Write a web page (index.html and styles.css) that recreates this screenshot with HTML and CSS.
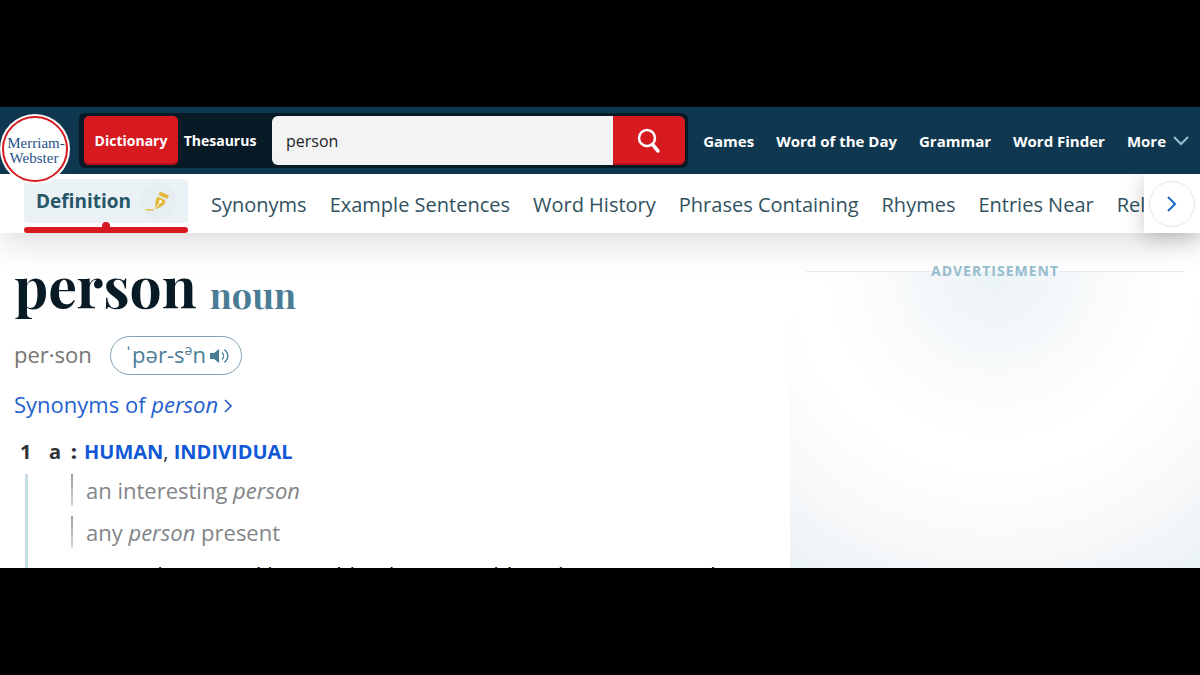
FILE: index.html
```
<!DOCTYPE html>
<html lang="en">
<head>
    <meta charset="UTF-8">
    <meta name="viewport" content="width=device-width, initial-scale=1.0">
    <title>Person Definition &amp; Meaning - Merriam-Webster</title>
    <link rel="stylesheet" href="styles.css">
</head>
<body>
    <div class="page">
        <header class="header">
            <a href="#" class="logo" aria-label="Merriam-Webster">
                <svg viewBox="0 0 72 72">
                    <circle cx="36" cy="36" r="35" fill="#fff"/>
                    <circle cx="36" cy="36" r="32" fill="none" stroke="#d71920" stroke-width="2"/>
                    <text x="37" y="35" text-anchor="middle">Merriam-</text>
                    <text x="35" y="50" text-anchor="middle">Webster</text>
                </svg>
            </a>
            <form class="search">
                <button type="button" class="mode active">Dictionary</button>
                <button type="button" class="mode thesaurus">Thesaurus</button>
                <input type="text" class="search-input" value="person" aria-label="Search">
                <button type="button" class="search-btn" aria-label="Search">
                    <svg width="24" height="26" viewBox="0 0 24 26" fill="none" stroke="#fff">
                        <circle cx="10" cy="10" r="8" stroke-width="2.500"/>
                        <path d="M15.500 16.500 21 23" stroke-width="3.500" stroke-linecap="round"/>
                    </svg>
                </button>
            </form>
            <nav class="main-nav">
                <a href="#">Games</a>
                <a href="#">Word of the Day</a>
                <a href="#">Grammar</a>
                <a href="#">Word Finder</a>
                <a href="#" class="more">More
                    <svg width="16" height="10" viewBox="0 0 16 10" fill="none" stroke="#97bece" stroke-width="2"><path d="M1 1l7 7 7-7"/></svg>
                </a>
            </nav>
        </header>

        <nav class="tabs">
            <a href="#" class="tab current">
                Definition
                <span class="pen">
                    <svg width="24" height="24" viewBox="0 0 24 24">
                        <path d="M0 20h8v1.500H0z" fill="#e0c04e"/>
                        <path d="M14 2.500l9 4-2 3.500-8.500-4z" fill="#e0b83c"/>
                        <path d="M11.500 7.500l8 4c0 4-4 6.500-10 8.500-.5-5-.5-9 2-12.500z" fill="#e0b83c"/>
                        <path d="M10.500 18.500l3.500-5.500" stroke="#fff" stroke-width="1"/>
                        <circle cx="14.500" cy="12.500" r="1.500" fill="#fff"/>
                    </svg>
                </span>
            </a>
            <a href="#" class="tab">Synonyms</a>
            <a href="#" class="tab">Example Sentences</a>
            <a href="#" class="tab">Word History</a>
            <a href="#" class="tab">Phrases Containing</a>
            <a href="#" class="tab">Rhymes</a>
            <a href="#" class="tab">Entries Near</a>
            <a href="#" class="tab">Related Articles</a>
            <div class="tabs-next">
                <button type="button" aria-label="Next">
                    <svg width="10" height="16" viewBox="0 0 10 16" fill="none" stroke="#1a6ac9" stroke-width="2"><path d="M1 1l7 7-7 7"/></svg>
                </button>
            </div>
        </nav>

        <div class="content">
            <main class="entry">
                <div class="entry-head">
                    <h1>person</h1>
                    <h2>noun</h2>
                </div>
                <div class="pron">
                    <span class="syllables">per·son</span>
                    <button type="button" class="audio">
                        <span>ˈpər-s<sup>ə</sup>n</span>
                        <svg width="20" height="16" viewBox="0 0 20 16">
                            <path d="M0 5h4l5-4v14l-5-4H0z" fill="#4a7d95"/>
                            <path d="M12 4.500c2 2 2 5 0 7M14.500 1.500c4.500 4 4.500 9 0 13" fill="none" stroke="#4a7d95" stroke-width="1.300"/>
                        </svg>
                    </button>
                </div>
                <a href="#" class="syn-link">Synonyms of <em>person</em>
                    <svg width="9" height="14" viewBox="0 0 9 14" fill="none" stroke="#265fc4" stroke-width="1.700"><path d="M1 1l6 6-6 6"/></svg>
                </a>
                <div class="sense">
                    <div class="sense-line">
                        <span class="num">1</span>
                        <span class="letter">a</span>
                        <b class="colon">:</b>
                        <span class="def"><a href="#">HUMAN</a>, <a href="#">INDIVIDUAL</a></span>
                    </div>
                    <div class="sense-body">
                        <p class="example">an interesting <em>person</em></p>
                        <p class="example">any <em>person</em> present</p>
                        <p class="usage">—sometimes used in combination now with various nouns and</p>
                    </div>
                </div>
            </main>
            <aside class="ad">
                <div class="ad-label"><span>ADVERTISEMENT</span></div>
            </aside>
        </div>
    </div>
</body>
</html>
```
FILE: styles.css
```
* {
    box-sizing: border-box;
}
body {
    margin: 0;
    padding: 107px 0;
    height: 100vh;
    background: #000;
    font-family: "Open Sans", sans-serif;
    overflow: hidden;
}
a {
    text-decoration: none;
}
button {
    border: 0;
    padding: 0;
    font-family: inherit;
    cursor: pointer;
}
.page {
    height: 100%;
    background: #fff;
    overflow: hidden;
    display: flex;
    flex-direction: column;
}

/* header */
.header {
    height: 67px;
    flex: none;
    background: #0f3850;
    display: flex;
    align-items: center;
    position: relative;
    z-index: 3;
}
.logo {
    width: 72px;
    height: 72px;
    margin-left: -1px;
    margin-right: 8px;
    align-self: flex-start;
    padding-top: 6px;
    flex: none;
}
.logo svg {
    display: block;
    width: 72px;
    height: 72px;
}
.logo text {
    font-family: "Liberation Serif", serif;
    font-size: 15px;
    fill: #1f5288;
}
.search {
    flex: 1;
    height: 55px;
    background: #081a26;
    border-radius: 6px;
    padding: 3px 3px 3px 5px;
    display: flex;
    align-items: center;
}
.mode {
    width: 94px;
    height: 49px;
    background: none;
    border-radius: 5px;
    color: #fff;
    font-size: 14px;
    font-weight: 700;
    white-space: nowrap;
    flex: none;
}
.mode.active {
    background: #d71920;
    box-shadow: inset 0 -2px #b5121b;
}
.mode.thesaurus {
    width: 84px;
    margin-right: 10px;
}
.search-input {
    flex: 1;
    min-width: 0;
    height: 49px;
    border: 0;
    border-radius: 6px 0 0 6px;
    background: #f3f3f3;
    padding: 0 14px;
    color: #212529;
    font-family: inherit;
    font-size: 16px;
}
.search-btn {
    width: 72px;
    height: 49px;
    background: #d71920;
    box-shadow: inset 0 -2px #b5121b;
    border-radius: 0 6px 6px 0;
    display: flex;
    align-items: center;
    justify-content: center;
}
.main-nav {
    display: flex;
    gap: 22px;
    padding: 0 11px 0 15px;
    white-space: nowrap;
}
.main-nav a {
    color: #fff;
    font-size: 15px;
    font-weight: 700;
}
.more {
    display: flex;
    align-items: center;
    gap: 7px;
}

/* tabs */
.tabs {
    height: 59px;
    flex: none;
    background: #fff;
    display: flex;
    align-items: center;
    gap: 23px;
    padding-left: 24px;
    box-shadow: 0 8px 36px rgba(0, 0, 0, 0.15);
    position: relative;
    z-index: 2;
    white-space: nowrap;
}
.tab {
    color: #30525f;
    font-size: 20px;
    padding-top: 1px;
    flex: none;
}
.tab.current {
    height: 44px;
    align-self: flex-start;
    margin-top: 5px;
    padding: 0 12px;
    display: flex;
    align-items: center;
    gap: 9px;
    font-size: 19px;
    font-weight: 700;
    color: #265667;
    border-radius: 4px;
    background: #ebf2f5;
    position: relative;
}
.tab.current::before {
    content: "";
    position: absolute;
    left: 0;
    right: 0;
    bottom: -10px;
    height: 6px;
    border-radius: 3px;
    background: #d71920;
}
.tab.current::after {
    content: "";
    position: absolute;
    left: 50%;
    bottom: -7px;
    width: 8px;
    height: 8px;
    margin-left: -4px;
    border-radius: 50%;
    background: #d71920;
}
.pen {
    width: 36px;
    height: 36px;
    border-radius: 50%;
    background: #e7eef2;
    display: flex;
    align-items: center;
    justify-content: center;
}
.tabs-next {
    position: absolute;
    right: 0;
    top: 0;
    bottom: 0;
    width: 56px;
    background: #fff;
    box-shadow: 0 4px 20px rgba(0, 0, 0, 0.22);
    clip-path: inset(0 0 -30px -30px);
    display: flex;
    align-items: center;
    justify-content: center;
}
.tabs-next button {
    width: 46px;
    height: 46px;
    border: 1px solid #dbe7f5;
    border-radius: 50%;
    background: #fff;
    display: flex;
    align-items: center;
    justify-content: center;
}

/* entry */
.content {
    flex: 1;
    min-height: 0;
    display: flex;
}
.entry {
    flex: 1;
    padding: 18px 14px 0;
    min-width: 0;
}
.entry-head {
    height: 70px;
    display: flex;
    align-items: baseline;
    gap: 13px;
}
h1, h2 {
    margin: 0;
    font-family: "Playfair Display", "Liberation Serif", serif;
    font-weight: 700;
}
h1 {
    font-size: 57px;
    line-height: 68px;
    color: #081a26;
}
h2 {
    font-size: 36px;
    color: #4a7d95;
}
.pron {
    display: flex;
    align-items: center;
    gap: 18px;
    margin-top: 15px;
    font-size: 22px;
}
.syllables {
    padding-bottom: 4px;
    color: #757575;
}
.audio {
    height: 39px;
    border: 1px solid #7fa5b7;
    border-radius: 20px;
    background: #fff;
    padding: 0 11px 0 14px;
    display: flex;
    align-items: center;
    gap: 4px;
    color: #4a7d95;
    font-size: 22px;
}
.audio span {
    padding-bottom: 4px;
}
.audio sup {
    font-size: 14px;
    line-height: 0;
}
.syn-link {
    display: block;
    margin-top: 14px;
    font-size: 22px;
    line-height: 30px;
    color: #1f5fd0;
}
.sense {
    margin-top: 19px;
    padding-left: 6px;
}
.sense-line {
    display: flex;
    font-size: 20px;
    line-height: 28px;
    color: #303336;
    font-weight: 700;
}
.num {
    width: 29px;
}
.letter {
    width: 22px;
}
.colon {
    width: 13px;
}
.def {
    font-weight: 400;
}
.def a {
    color: #1258d6;
    font-weight: 700;
}
.sense-body {
    margin: 8px 0 0 5px;
    padding-left: 43px;
    border-left: 3px solid #c5dce4;
}
.example {
    margin: 0 0 10px;
    padding-left: 15px;
    background: linear-gradient(#97999b, #d5d7d8) no-repeat 0 0 / 2px 100%;
    font-size: 22px;
    line-height: 32px;
    color: #828588;
}
.usage {
    margin: 0;
    font-size: 22px;
    line-height: 32px;
    color: #000;
    white-space: nowrap;
}

/* ad */
.ad {
    width: 410px;
    padding: 28px 16px 0;
    background: radial-gradient(circle at 50% 0, #ebf3f6 0, #f2f6f9 50px, #f8fafb 100px, #fff 170px, #fff 200px, #f5f7f9 300px, #ebf3f6 360px) no-repeat 0 38px;
}
.ad-label {
    display: flex;
    align-items: center;
    color: #97bece;
    font-size: 14px;
    line-height: 20px;
    font-weight: 700;
    letter-spacing: 1px;
}
.ad-label::before, .ad-label::after {
    content: "";
    flex: 1;
    height: 1px;
    background: #e3ecf1;
}
```
